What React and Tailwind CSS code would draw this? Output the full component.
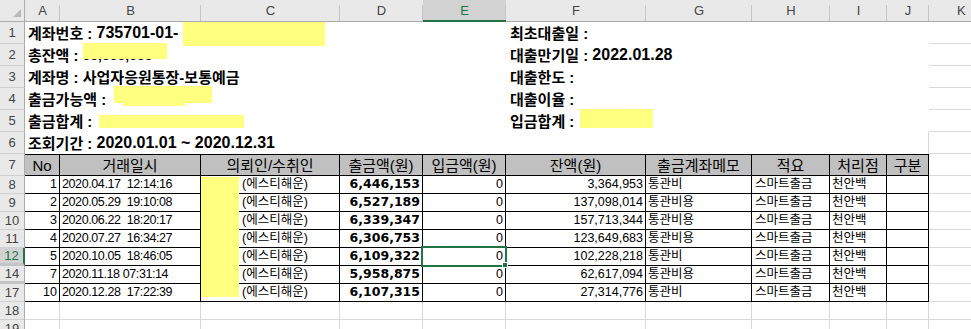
import React from "react";

// column widths include the 1px gridline on the right edge
const cols = [
    { key: "A", w: "w-[35px]" },
    { key: "B", w: "w-[141px]" },
    { key: "C", w: "w-[139px]" },
    { key: "D", w: "w-[83px]" },
    { key: "E", w: "w-[83px]" },
    { key: "F", w: "w-[140px]" },
    { key: "G", w: "w-[106px]" },
    { key: "H", w: "w-[78px]" },
    { key: "I", w: "w-[57px]" },
    { key: "J", w: "w-[42px]" },
];

const rows = [
    { n: "8", no: 1, dt: "2020.04.17  12:14:16", out: "6,446,153", bal: "3,364,953", memo: "통관비" },
    { n: "9", no: 2, dt: "2020.05.29  19:10:08", out: "6,527,189", bal: "137,098,014", memo: "통관비용" },
    { n: "10", no: 3, dt: "2020.06.22  18:20:17", out: "6,339,347", bal: "157,713,344", memo: "통관비용" },
    { n: "11", no: 4, dt: "2020.07.27  16:34:27", out: "6,306,753", bal: "123,649,683", memo: "통관비용" },
    { n: "12", no: 5, dt: "2020.10.05  18:46:05", out: "6,109,322", bal: "102,228,218", memo: "통관비", sel: true },
    { n: "14", no: 7, dt: "2020.11.18 07:31:14", out: "5,958,875", bal: "62,617,094", memo: "통관비용" },
    { n: "17", no: 10, dt: "2020.12.28  17:22:39", out: "6,107,315", bal: "27,314,776", memo: "통관비" },
];

const RowHead = ({ children, h = "h-[22px]", sel = false, gap = false }) => (
    <div
        className={
            "w-[25px] shrink-0 flex items-center justify-center text-[13px] leading-none " +
            h +
            (sel
                ? " bg-[#d2d2d2] text-[#217346] border-r-2 border-r-[#217346]"
                : " bg-[#e9e9e9] text-[#444] border-r border-r-[#ababab]") +
            (gap ? " border-b-[3px] border-b-[#c4c4c4]" : " border-b border-b-[#cfcfcf]")
        }
    >
        {children}
    </div>
);

const Num = ({ children }) => <span className="text-[16px]">{children}</span>;

const TopRow = ({ n, left, right, last = false }) => (
    <div className="flex h-[22px]">
        <RowHead>{n}</RowHead>
        <div className="w-[481px] shrink-0 flex items-center pl-[3px] text-[15px] font-bold leading-none whitespace-pre">
            {left}
        </div>
        <div
            className={
                "w-[423px] shrink-0 flex items-center pl-[4px] text-[15px] font-bold leading-none whitespace-pre" +
                (last ? " border-r border-[#d9d9d9]" : "")
            }
        >
            {right}
        </div>
        <div className="flex-1 border-b border-[#d9d9d9]" />
    </div>
);

export default function App() {
    return (
        <div className="relative w-[971px] h-[329px] overflow-hidden bg-white text-black font-['Liberation_Sans','Noto_Sans_CJK_KR',sans-serif]">
            {/* column headers */}
            <div className="flex h-[22px] bg-[#e9e9e9] border-b border-[#ababab]">
                <div className="relative w-[25px] shrink-0 border-r border-[#ababab]">
                    <svg className="absolute left-[12px] top-[9px]" width="10" height="9" viewBox="0 0 10 9">
                        <polygon points="9,0 9,8 1,8" fill="#b9b9b9" />
                    </svg>
                </div>
                {cols.map((c) => (
                    <div
                        key={c.key}
                        className={
                            c.w +
                            " relative shrink-0 flex items-center justify-center text-[13px] leading-none after:content-[''] after:absolute after:right-0 after:top-[5px] after:bottom-0 after:w-px after:bg-[#c6c6c6]" +
                            (c.key === "E"
                                ? " bg-[#d2d2d2] text-[#217346] border-b-2 border-[#217346] -mb-px"
                                : " text-[#444]")
                        }
                    >
                        {c.key}
                    </div>
                ))}
                <div className="flex-1 flex items-center pl-[28px] text-[13px] leading-none text-[#444]">K</div>
            </div>

            <TopRow
                n="1"
                left={
                    <>
                        계좌번호 : <Num>735701-01-</Num>
                    </>
                }
                right="최초대출일 :"
            />
            <TopRow
                n="2"
                left={
                    <>
                        총잔액 :<span className="text-[14px]"> 55,555,555</span>
                    </>
                }
                right={
                    <>
                        대출만기일 : <Num>2022.01.28</Num>
                    </>
                }
            />
            <TopRow n="3" left="계좌명 : 사업자응원통장-보통예금" right="대출한도 :" />
            <TopRow n="4" left="출금가능액 :" right="대출이율 :" />
            <TopRow n="5" left="출금합계 :" right="입금합계 :" />
            <TopRow
                n="6"
                left={
                    <>
                        조회기간 : <Num>2020.01.01 ~ 2020.12.31</Num>
                    </>
                }
                right=""
                last
            />

            {/* table header */}
            <div className="flex h-[22px]">
                <RowHead>7</RowHead>
                {["No", "거래일시", "의뢰인/수취인", "출금액(원)", "입금액(원)", "잔액(원)", "출금계좌메모", "적요", "처리점", "구분"].map(
                    (t, i) => (
                        <div
                            key={t}
                            className={
                                cols[i].w +
                                " shrink-0 flex items-center justify-center bg-[#c0c0c0] border-t border-b border-r border-black text-[15px] leading-none whitespace-nowrap"
                            }
                        >
                            {t}
                        </div>
                    )
                )}
                <div className="flex-1 border-b border-[#d9d9d9]" />
            </div>

            {rows.map((r) => (
                <div key={r.n} className="flex h-[18px] text-[12.5px] leading-none whitespace-pre">
                    <RowHead h="h-[18px]" sel={r.sel} gap={r.n === "12" || r.n === "14"}>
                        {r.n}
                    </RowHead>
                    <div className="w-[35px] shrink-0 flex items-center justify-end pr-[2px] border-r border-b border-black">{r.no}</div>
                    <div className="w-[141px] shrink-0 flex items-center pl-[2px] tracking-[-0.4px] border-r border-b border-black">{r.dt}</div>
                    <div className="w-[139px] shrink-0 flex items-center pl-[41px] border-r border-b border-black">(에스티해운)</div>
                    <div className="w-[83px] shrink-0 flex items-center justify-end pr-[2px] font-bold font-['DejaVu_Sans',sans-serif] border-r border-b border-black">
                        {r.out}
                    </div>
                    <div className="w-[83px] shrink-0 flex items-center justify-end pr-[2px] border-r border-b border-black">0</div>
                    <div className="w-[140px] shrink-0 flex items-center justify-end pr-[2px] border-r border-b border-black">{r.bal}</div>
                    <div className="w-[106px] shrink-0 flex items-center pl-[2px] border-r border-b border-black">{r.memo}</div>
                    <div className="w-[78px] shrink-0 flex items-center pl-[3px] border-r border-b border-black">스마트출금</div>
                    <div className="w-[57px] shrink-0 flex items-center pl-[2px] border-r border-b border-black">천안백</div>
                    <div className="w-[42px] shrink-0 border-r border-b border-black" />
                    <div className="flex-1 border-b border-[#d9d9d9]" />
                </div>
            ))}

            {["18", "19"].map((n) => (
                <div key={n} className="flex h-[18px]">
                    <RowHead h="h-[18px]">{n}</RowHead>
                    {cols.map((c) => (
                        <div key={c.key} className={c.w + " shrink-0 border-r border-b border-[#d9d9d9]"} />
                    ))}
                    <div className="flex-1 border-b border-[#d9d9d9]" />
                </div>
            ))}

            {/* redaction boxes */}
            <div className="absolute left-[183px] top-[22px] w-[142px] h-[24px] bg-[#ffff80]" />
            <div className="absolute left-[83px] top-[43px] w-[84px] h-[16px] bg-[#ffff80]" />
            <div className="absolute left-[114px] top-[86px] w-[98px] h-[17px] bg-[#ffff80]" />
            <div className="absolute left-[123px] top-[103px] w-[62px] h-[3px] bg-[#ffff80]" />
            <div className="absolute left-[99px] top-[115px] w-[145px] h-[13px] bg-[#ffff80]" />
            <div className="absolute left-[580px] top-[109px] w-[73px] h-[19px] bg-[#ffff80]" />
            <div className="absolute left-[201px] top-[177px] w-[38px] h-[120px] bg-[#ffff80]" />

            {/* active cell E12 */}
            <div className="absolute left-[421px] top-[246px] w-[86px] h-[21px] border-2 border-[#217346]" />
            <div className="absolute left-[502px] top-[262px] w-[6px] h-[6px] bg-[#217346] border border-white" />
        </div>
    );
}
